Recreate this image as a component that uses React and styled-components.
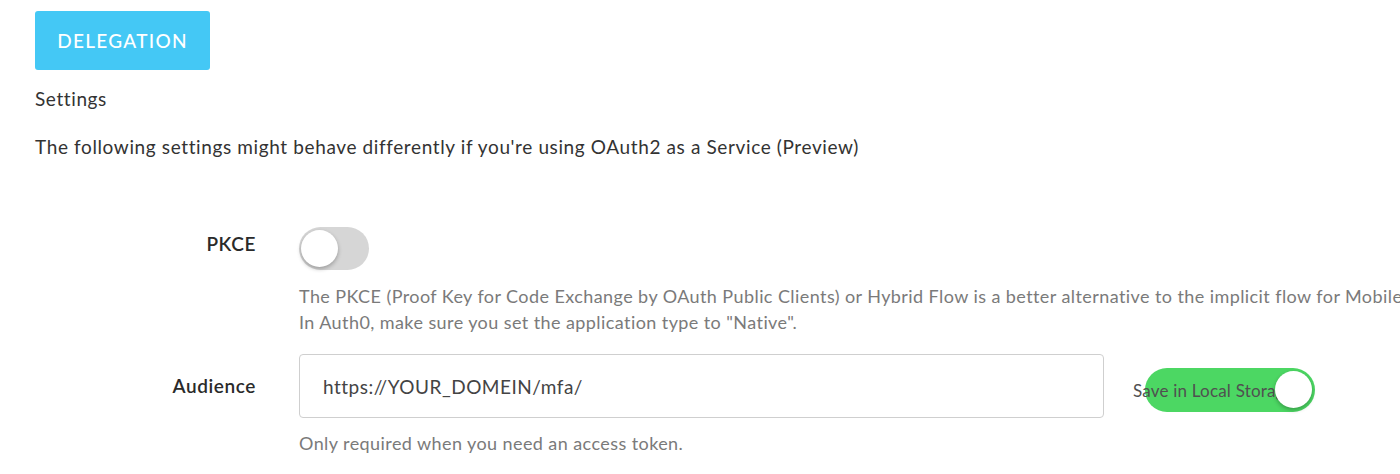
import React, { useState } from "react";
import styled, { createGlobalStyle } from "styled-components";

const GlobalStyle = createGlobalStyle`
  body {
    margin: 0;
    background: #fff;
    font-family: Lato, "Open Sans", "Liberation Sans", sans-serif;
    color: #333;
    overflow: hidden;
  }
`;

const Page = styled.div`
  padding: 11px 0 0 35px;
  width: 1365px;
`;

const TabButton = styled.button`
  display: flex;
  align-items: center;
  justify-content: center;
  width: 175px;
  height: 59px;
  border: none;
  border-radius: 3px;
  background: #44c8f5;
  color: #fff;
  font-family: inherit;
  font-size: 19px;
  font-weight: 500;
  letter-spacing: 1.3px;
  text-transform: uppercase;
  cursor: pointer;
`;

const SectionTitle = styled.h3`
  margin: 17px 0 0;
  font-size: 19px;
  font-weight: 400;
  letter-spacing: 0.6px;
  line-height: 24px;
  color: #333;
`;

const Intro = styled.p`
  margin: 24px 0 0;
  font-size: 19px;
  letter-spacing: 0.62px;
  line-height: 24px;
  color: #333;
`;

const Form = styled.div`
  margin-top: 68px;
  display: flex;
  flex-direction: column;
`;

const Row = styled.div`
  display: flex;
  align-items: ${(p) => p.$align || "flex-start"};
  gap: 43px;
  margin-top: ${(p) => p.$top || 0}px;
`;

const Label = styled.label`
  width: 221px;
  flex: none;
  text-align: right;
  font-size: 19px;
  font-weight: 600;
  letter-spacing: 0.6px;
  line-height: 24px;
  color: #2a2a2a;
  padding-top: ${(p) => p.$pad || 0}px;
`;

const Hint = styled.div`
  margin: ${(p) => p.$top || 0}px 0 0 264px;
  font-size: 18px;
  letter-spacing: 0.42px;
  line-height: 26px;
  color: #7a7a7a;
  white-space: nowrap;
`;

const Track = styled.button`
  position: relative;
  flex: none;
  width: ${(p) => p.$width}px;
  height: ${(p) => p.$height}px;
  padding: 0;
  border: none;
  border-radius: 999px;
  background: ${(p) => (p.$on ? "#4cd763" : "#d6d6d6")};
  margin-top: ${(p) => p.$top || 0}px;
  margin-left: ${(p) => p.$left || 0}px;
  cursor: pointer;
`;

const Knob = styled.span`
  position: absolute;
  top: 3px;
  ${(p) => (p.$on ? "right: 3px;" : "left: 2px;")}
  width: 37px;
  height: 37px;
  border-radius: 50%;
  background: #fff;
  box-shadow: 0 2px 4px rgba(0, 0, 0, 0.28);
  z-index: 2;
`;

const SwitchText = styled.span`
  position: absolute;
  left: -12px;
  top: 0;
  width: 160px;
  height: 100%;
  display: flex;
  align-items: center;
  overflow: hidden;
  white-space: nowrap;
  font-family: Lato, "Open Sans", "Liberation Sans", sans-serif;
  font-size: 17px;
  letter-spacing: 0.2px;
  color: #505050;
  z-index: 1;
`;

const TextInput = styled.input`
  box-sizing: border-box;
  width: 805px;
  height: 64px;
  padding: 0 23px;
  border: 1px solid #cfcfcf;
  border-radius: 4px;
  font-family: inherit;
  font-size: 19px;
  letter-spacing: 0.5px;
  color: #444;
  outline: none;
`;

function Switch({ on, onToggle, width = 70, height = 43, top, left, children }) {
  return (
    <Track $on={on} $width={width} $height={height} $top={top} $left={left} onClick={onToggle}>
      {children && <SwitchText>{children}</SwitchText>}
      <Knob $on={on} />
    </Track>
  );
}

export default function App() {
  const [pkce, setPkce] = useState(false);
  const [local, setLocal] = useState(true);
  const [audience, setAudience] = useState("https://YOUR_DOMEIN/mfa/");

  return (
    <>
      <GlobalStyle />
      <Page>
        <TabButton>Delegation</TabButton>
        <SectionTitle>Settings</SectionTitle>
        <Intro>The following settings might behave differently if you're using OAuth2 as a Service (Preview)</Intro>

        <Form>
          <Row>
            <Label $pad={5}>PKCE</Label>
            <Switch on={pkce} onToggle={() => setPkce(!pkce)} />
          </Row>
          <Hint $top={13}>
            The PKCE (Proof Key for Code Exchange by OAuth Public Clients) or Hybrid Flow is a better alternative to the implicit flow for Mobile
            <br />
            In Auth0, make sure you set the application type to "Native".
          </Hint>

          <Row $top={19} $align="center">
            <Label>Audience</Label>
            <TextInput value={audience} onChange={(e) => setAudience(e.target.value)} />
            <Switch on={local} onToggle={() => setLocal(!local)} width={170} height={44} top={8} left={-2}>
              Save in Local Storage
            </Switch>
          </Row>
          <Hint $top={12}>Only required when you need an access token.</Hint>
        </Form>
      </Page>
    </>
  );
}
